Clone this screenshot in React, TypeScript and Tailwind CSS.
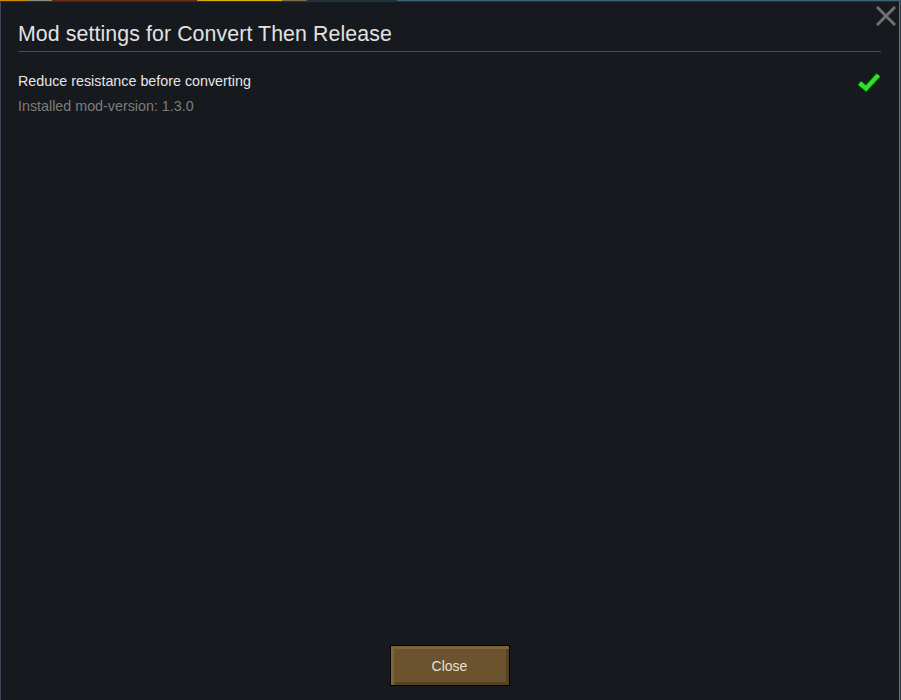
import React from "react";

export default function App() {
  return (
    <div className="w-[901px] h-[700px] flex flex-col bg-[#2a3a48] overflow-hidden" style={{ fontFamily: '"Liberation Sans", Arial, sans-serif' }}>
      <div className="h-[1px] flex shrink-0">
        <div className="w-[27px] bg-[#d08a10]" />
        <div className="w-[25px] bg-[#8a8a80]" />
        <div className="w-[145px] bg-[#6a2a10]" />
        <div className="w-[5px] bg-[#c0a040]" />
        <div className="w-[80px] bg-[#d8b010]" />
        <div className="w-[25px] bg-[#7a6a50]" />
        <div className="w-[90px] bg-[#20303a]" />
        <div className="flex-1 bg-[#3a6478]" />
      </div>
      <div className="flex-1 flex">
        <div className="w-[900px] relative bg-[#16191e] border-l border-r border-t border-l-[#3c4658] border-r-[#6b7480] border-t-[#2a3038] flex flex-col">
          <button className="absolute right-[3px] top-[4px] w-[20px] h-[20px] flex items-center justify-center">
            <svg width="20" height="20" viewBox="0 0 20 20">
              <path d="M2 2 L18 18 M18 2 L2 18" stroke="#6e7275" strokeWidth="3" strokeLinecap="square" />
            </svg>
          </button>
          <div className="px-[17px] pt-[18px] flex flex-col flex-1">
            <div className="text-[21.3px] leading-[28px] text-[#e2e2e2] tracking-[0.1px]">Mod settings for Convert Then Release</div>
            <div className="h-[1px] bg-[#4a4d50] mt-[3px] mr-[1px]" />
            <div className="flex items-start mt-[21px]">
              <div className="flex-1 flex flex-col">
                <div className="text-[14.3px] leading-[17px] text-[#e6e6e6]">Reduce resistance before converting</div>
                <div className="text-[14.3px] leading-[17px] text-[#7d7d7d] mt-[8px]">Installed mod-version: 1.3.0</div>
              </div>
              <svg width="26" height="23" viewBox="0 0 26 23" className="mt-[-3px] mr-[0px]">
                <path d="M3.5 13 L10 18.5 L22.5 5" fill="none" stroke="#0a3a0a" strokeWidth="7" strokeLinejoin="miter" />
                <path d="M3.5 13 L10 18.5 L22.5 5" fill="none" stroke="#2ee02e" strokeWidth="4.5" strokeLinejoin="miter" />
              </svg>
            </div>
            <div className="flex-1" />
            <div className="flex justify-center pb-[14px] pr-[1px]">
              <button className="w-[120px] h-[41px] border border-black bg-[#6b532f] text-[14px] leading-[16px] text-[#e8e0d4] shadow-[inset_3px_3px_0_#7e6538,inset_-3px_-3px_0_#574224]">
                Close
              </button>
            </div>
          </div>
        </div>
      </div>
    </div>
  );
}
